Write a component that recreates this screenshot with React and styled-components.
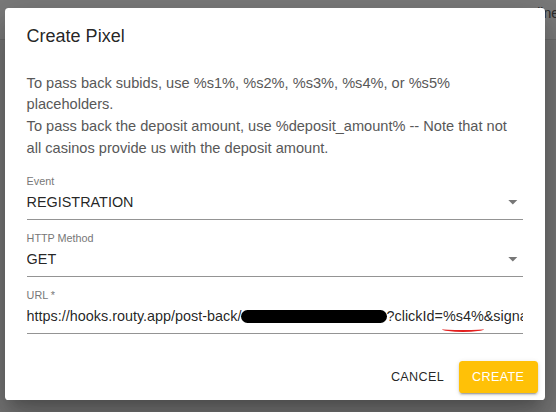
import React from 'react';
import styled, { createGlobalStyle } from 'styled-components';

const GlobalStyle = createGlobalStyle`
  html, body {
    margin: 0;
    padding: 0;
  }
  body {
    font-family: "Liberation Sans", Arial, sans-serif;
  }
`;

const Page = styled.div`
  position: relative;
  width: 556px;
  height: 412px;
  overflow: hidden;
  background: #767676;
`;

const Header = styled.header`
  height: 40px;
  box-sizing: border-box;
  display: flex;
  justify-content: flex-end;
  align-items: flex-start;
  padding-top: 5px;
  background: #7b7b7b;
  border-bottom: 1px solid #6c6c6c;
`;

const HeaderText = styled.span`
  margin-right: -3px;
  font-size: 14px;
  color: #2c2c2c;
`;

/* modal sits over the page */
const Dialog = styled.div`
  position: absolute;
  left: 5px;
  top: 8px;
  width: 540px;
  display: flex;
  flex-direction: column;
  background: #fff;
  border-radius: 3.6px;
  box-shadow: 0 10px 14px -6px rgba(0, 0, 0, 0.2),
    0 22px 34px 3px rgba(0, 0, 0, 0.14), 0 8px 41px 7px rgba(0, 0, 0, 0.12);
`;

const Title = styled.h2`
  margin: 0;
  padding: 14.4px 21.6px;
  font-size: 18px;
  line-height: 28.8px;
  font-weight: 400;
  color: rgba(0, 0, 0, 0.87);
`;

const Content = styled.div`
  padding: 7.2px 21.6px 20.2px;
`;

const Description = styled.p`
  margin: 0 0 15.4px;
  font-size: 14.6px;
  line-height: 21.6px;
  color: #585858;
`;

const Fields = styled.div`
  display: flex;
  flex-direction: column;
  gap: 12px;
`;

const Field = styled.div`
  display: flex;
  flex-direction: column;
`;

const Label = styled.label`
  font-size: 10.8px;
  line-height: 12px;
  color: #777;
`;

const ValueRow = styled.div`
  margin-top: 6px;
  display: flex;
  align-items: center;
  padding-bottom: 7px;
  border-bottom: 1px solid #949494;
  overflow: hidden;
`;

const Value = styled.div`
  flex: 1;
  min-width: 0;
  font-size: 14.4px;
  line-height: 19px;
  color: rgba(0, 0, 0, 0.87);
  white-space: nowrap;
`;

const Arrow = styled.svg`
  flex: none;
  width: 21.6px;
  height: 21.6px;
  margin: -1.3px 0;
  fill: #777;
`;

const Redact = styled.span`
  display: inline-block;
  width: 146px;
  height: 13px;
  margin-left: -1px;
  vertical-align: -2px;
  border-radius: 7px;
  background: #000;
`;

const Marked = styled.span`
  position: relative;
  &::after {
    content: '';
    position: absolute;
    left: -1px;
    right: 0;
    bottom: -8px;
    height: 4px;
    border-bottom: 2.5px solid #e3201f;
    border-radius: 0 0 50% 50%;
  }
`;

const Actions = styled.div`
  display: flex;
  justify-content: flex-end;
  align-items: center;
  gap: 7.2px;
  padding: 7.2px;
`;

const Button = styled.button`
  height: 32.4px;
  padding: 0 ${(p) => (p.$primary ? '13.5px' : '7.2px')};
  border: none;
  border-radius: 3.6px;
  font-family: inherit;
  font-size: 12.6px;
  letter-spacing: 0.36px;
  text-transform: uppercase;
  color: ${(p) => (p.$primary ? '#fff' : 'rgba(0, 0, 0, 0.87)')};
  background: ${(p) => (p.$primary ? '#ffc107' : 'transparent')};
  box-shadow: ${(p) =>
    p.$primary
      ? '0 3px 1px -2px rgba(0,0,0,0.2), 0 2px 2px 0 rgba(0,0,0,0.14), 0 1px 5px 0 rgba(0,0,0,0.12)'
      : 'none'};
  cursor: pointer;
`;

const DropArrow = () => (
  <Arrow viewBox="0 0 24 24">
    <path d="M7 10l5 5 5-5z" />
  </Arrow>
);

const SelectField = ({ label, value }) => (
  <Field>
    <Label>{label}</Label>
    <ValueRow>
      <Value>{value}</Value>
      <DropArrow />
    </ValueRow>
  </Field>
);

export default function App() {
  return (
    <>
      <GlobalStyle />
      <Page>
        <Header>
          <HeaderText>Online</HeaderText>
        </Header>
        <Dialog>
          <Title>Create Pixel</Title>
          <Content>
            <Description>
              To pass back subids, use %s1%, %s2%, %s3%, %s4%, or %s5% placeholders.
              <br />
              To pass back the deposit amount, use %deposit_amount% -- Note that not all
              casinos provide us with the deposit amount.
            </Description>
            <Fields>
              <SelectField label="Event" value="REGISTRATION" />
              <SelectField label="HTTP Method" value="GET" />
              <Field>
                <Label>URL *</Label>
                <ValueRow>
                  <Value>
                    https://hooks.routy.app/post-back/<Redact />?clickId=
                    <Marked>%s4%</Marked>&amp;signature=
                  </Value>
                </ValueRow>
              </Field>
            </Fields>
          </Content>
          <Actions>
            <Button>Cancel</Button>
            <Button $primary>Create</Button>
          </Actions>
        </Dialog>
      </Page>
    </>
  );
}
